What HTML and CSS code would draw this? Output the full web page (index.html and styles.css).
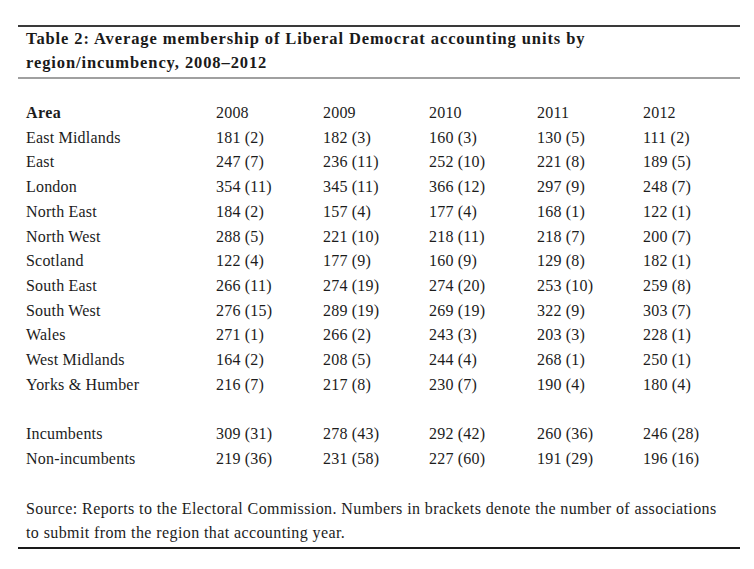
FILE: index.html
```html
<!DOCTYPE html>
<html>
<head>
<meta charset="utf-8">
<link rel="stylesheet" href="styles.css">
</head>
<body>
<div class="figure">
  <div class="caption">Table 2: Average membership of Liberal Democrat accounting units by<br>region/incumbency, 2008–2012</div>
  <table class="data">
    <colgroup>
      <col class="c-area"><col class="c-2008"><col class="c-2009"><col class="c-2010"><col class="c-2011"><col class="c-2012">
    </colgroup>
    <thead>
      <tr><th>Area</th><th>2008</th><th>2009</th><th>2010</th><th>2011</th><th>2012</th></tr>
    </thead>
    <tbody>
      <tr><td>East Midlands</td><td>181 (2)</td><td>182 (3)</td><td>160 (3)</td><td>130 (5)</td><td>111 (2)</td></tr>
      <tr><td>East</td><td>247 (7)</td><td>236 (11)</td><td>252 (10)</td><td>221 (8)</td><td>189 (5)</td></tr>
      <tr><td>London</td><td>354 (11)</td><td>345 (11)</td><td>366 (12)</td><td>297 (9)</td><td>248 (7)</td></tr>
      <tr><td>North East</td><td>184 (2)</td><td>157 (4)</td><td>177 (4)</td><td>168 (1)</td><td>122 (1)</td></tr>
      <tr><td>North West</td><td>288 (5)</td><td>221 (10)</td><td>218 (11)</td><td>218 (7)</td><td>200 (7)</td></tr>
      <tr><td>Scotland</td><td>122 (4)</td><td>177 (9)</td><td>160 (9)</td><td>129 (8)</td><td>182 (1)</td></tr>
      <tr><td>South East</td><td>266 (11)</td><td>274 (19)</td><td>274 (20)</td><td>253 (10)</td><td>259 (8)</td></tr>
      <tr><td>South West</td><td>276 (15)</td><td>289 (19)</td><td>269 (19)</td><td>322 (9)</td><td>303 (7)</td></tr>
      <tr><td>Wales</td><td>271 (1)</td><td>266 (2)</td><td>243 (3)</td><td>203 (3)</td><td>228 (1)</td></tr>
      <tr><td>West Midlands</td><td>164 (2)</td><td>208 (5)</td><td>244 (4)</td><td>268 (1)</td><td>250 (1)</td></tr>
      <tr><td>Yorks &amp; Humber</td><td>216 (7)</td><td>217 (8)</td><td>230 (7)</td><td>190 (4)</td><td>180 (4)</td></tr>
      <tr class="spacer"><td colspan="6"></td></tr>
      <tr><td>Incumbents</td><td>309 (31)</td><td>278 (43)</td><td>292 (42)</td><td>260 (36)</td><td>246 (28)</td></tr>
      <tr><td>Non-incumbents</td><td>219 (36)</td><td>231 (58)</td><td>227 (60)</td><td>191 (29)</td><td>196 (16)</td></tr>
    </tbody>
  </table>
  <p class="source">Source: Reports to the Electoral Commission. Numbers in brackets denote the number of associations<br>to submit from the region that accounting year.</p>
</div>
</body>
</html>
```

FILE: styles.css
```css
html, body {
  margin: 0;
  padding: 0;
  background: #ffffff;
}
body {
  font-family: "Liberation Serif", "Times New Roman", serif;
  color: #1c1c1c;
  font-size: 16px;
}
.figure {
  margin: 25px 14px 0 18px;
  width: 722px;
  border-top: 2px solid #3a3a3a;
  border-bottom: 2px solid #1a1a1a;
}
.caption {
  font-weight: bold;
  font-size: 16.5px;
  letter-spacing: 0.9px;
  line-height: 24px;
  padding: 0 0 2px 8px;
  border-bottom: 2px solid #a0a0a0;
  color: #1a1a1a;
}
.data {
  margin: 22px 0 0 8px;
  border-collapse: collapse;
  table-layout: fixed;
  width: 714px;
}
.c-area { width: 190px; }
.c-2008 { width: 107px; }
.c-2009 { width: 106px; }
.c-2010 { width: 108px; }
.c-2011 { width: 106px; }
.c-2012 { width: 97px; }
.data th, .data td {
  padding: 0;
  text-align: left;
  height: 24.7px;
  line-height: 24.7px;
  white-space: nowrap;
  vertical-align: middle;
  letter-spacing: 0.2px;
}
.data th {
  font-weight: bold;
  letter-spacing: 0.4px;
}
.data thead th:not(:first-child) {
  font-weight: normal;
  letter-spacing: 0.2px;
}
.source {
  margin: 25px 8px 1px 8px;
  line-height: 24.5px;
  letter-spacing: 0.4px;
  white-space: nowrap;
}
```
